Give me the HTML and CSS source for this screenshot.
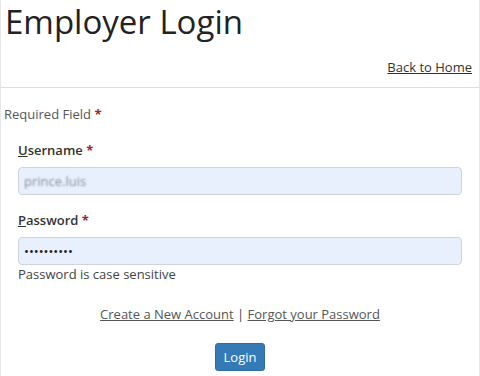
FILE: index.html
```html
<!DOCTYPE html>
<html lang="en">
<head>
  <meta charset="UTF-8" />
  <meta name="viewport" content="width=device-width, initial-scale=1.0" />
  <title>Employer Login</title>
  <link rel="stylesheet" href="styles.css">
</head>
<body>
  <div class="page">
    <header>
      <h1>Employer Login</h1>
      <div class="back"><a href="#">Back to Home</a></div>
    </header>
    <form class="login" onsubmit="return false">
      <p class="required">Required Field <span class="star">*</span></p>
      <div class="field">
        <label for="username"><u>U</u>sername <span class="star">*</span></label>
        <input type="text" id="username" class="blurred" value="prince.luis">
      </div>
      <div class="field">
        <label for="password"><u>P</u>assword <span class="star">*</span></label>
        <input type="password" id="password" value="abcdefghij">
        <div class="help">Password is case sensitive</div>
      </div>
      <div class="links">
        <a href="#">Create a New Account</a> | <a href="#">Forgot your Password</a>
      </div>
      <div class="actions">
        <button type="submit">Login</button>
      </div>
    </form>
  </div>
</body>
</html>
```

FILE: styles.css
```css
body {
  margin: 0;
  font-family: "Open Sans", "Liberation Sans", sans-serif;
  font-size: 13px;
  line-height: 18px;
  color: #333;
  background: #fff;
}
.page {
  height: 376px;
  border-left: 1px solid #e6e6e6;
  border-right: 1px solid #e6e6e6;
  box-sizing: border-box;
}
header {
  border-bottom: 1px solid #ddd;
  padding-bottom: 11px;
}
header h1 {
  margin: 0;
  padding-left: 4px;
  font-size: 33px;
  line-height: 44px;
  font-weight: 400;
  color: #222;
}
.back {
  margin-top: 14px;
  text-align: right;
  padding-right: 7px;
}
a {
  color: #333;
  text-decoration: underline;
}
.login {
  padding: 0 17px 0 3px;
}
.required {
  margin: 17px 0 0;
  color: #555;
}
.star {
  color: #a32424;
  font-weight: 700;
}
.field {
  padding-left: 14px;
}
.field label {
  display: block;
  font-weight: 600;
  margin-top: 18px;
  margin-bottom: 8px;
}
.field + .field label {
  margin-top: 16px;
}
.field input {
  display: block;
  width: 100%;
  height: 28px;
  box-sizing: border-box;
  padding: 0 5px;
  border: 1px solid #cfd4da;
  border-radius: 4px;
  background: #e8f0fe;
  font-family: inherit;
  font-size: 13px;
  color: #222;
}
.field input.blurred {
  color: transparent;
  text-shadow: 0 0 2px #8a8f99;
}
.help {
  color: #444;
}
.links {
  margin-top: 22px;
  text-align: center;
  padding-left: 14px;
  color: #444;
}
.links a {
  color: #555;
}
.actions {
  margin-top: 20px;
  text-align: center;
  padding-left: 14px;
}
.actions button {
  height: 28px;
  padding: 0 8px;
  border: 1px solid #2e6da4;
  border-radius: 3px;
  background: #337ab7;
  color: #fff;
  font-family: inherit;
  font-size: 13px;
  cursor: pointer;
}
```
